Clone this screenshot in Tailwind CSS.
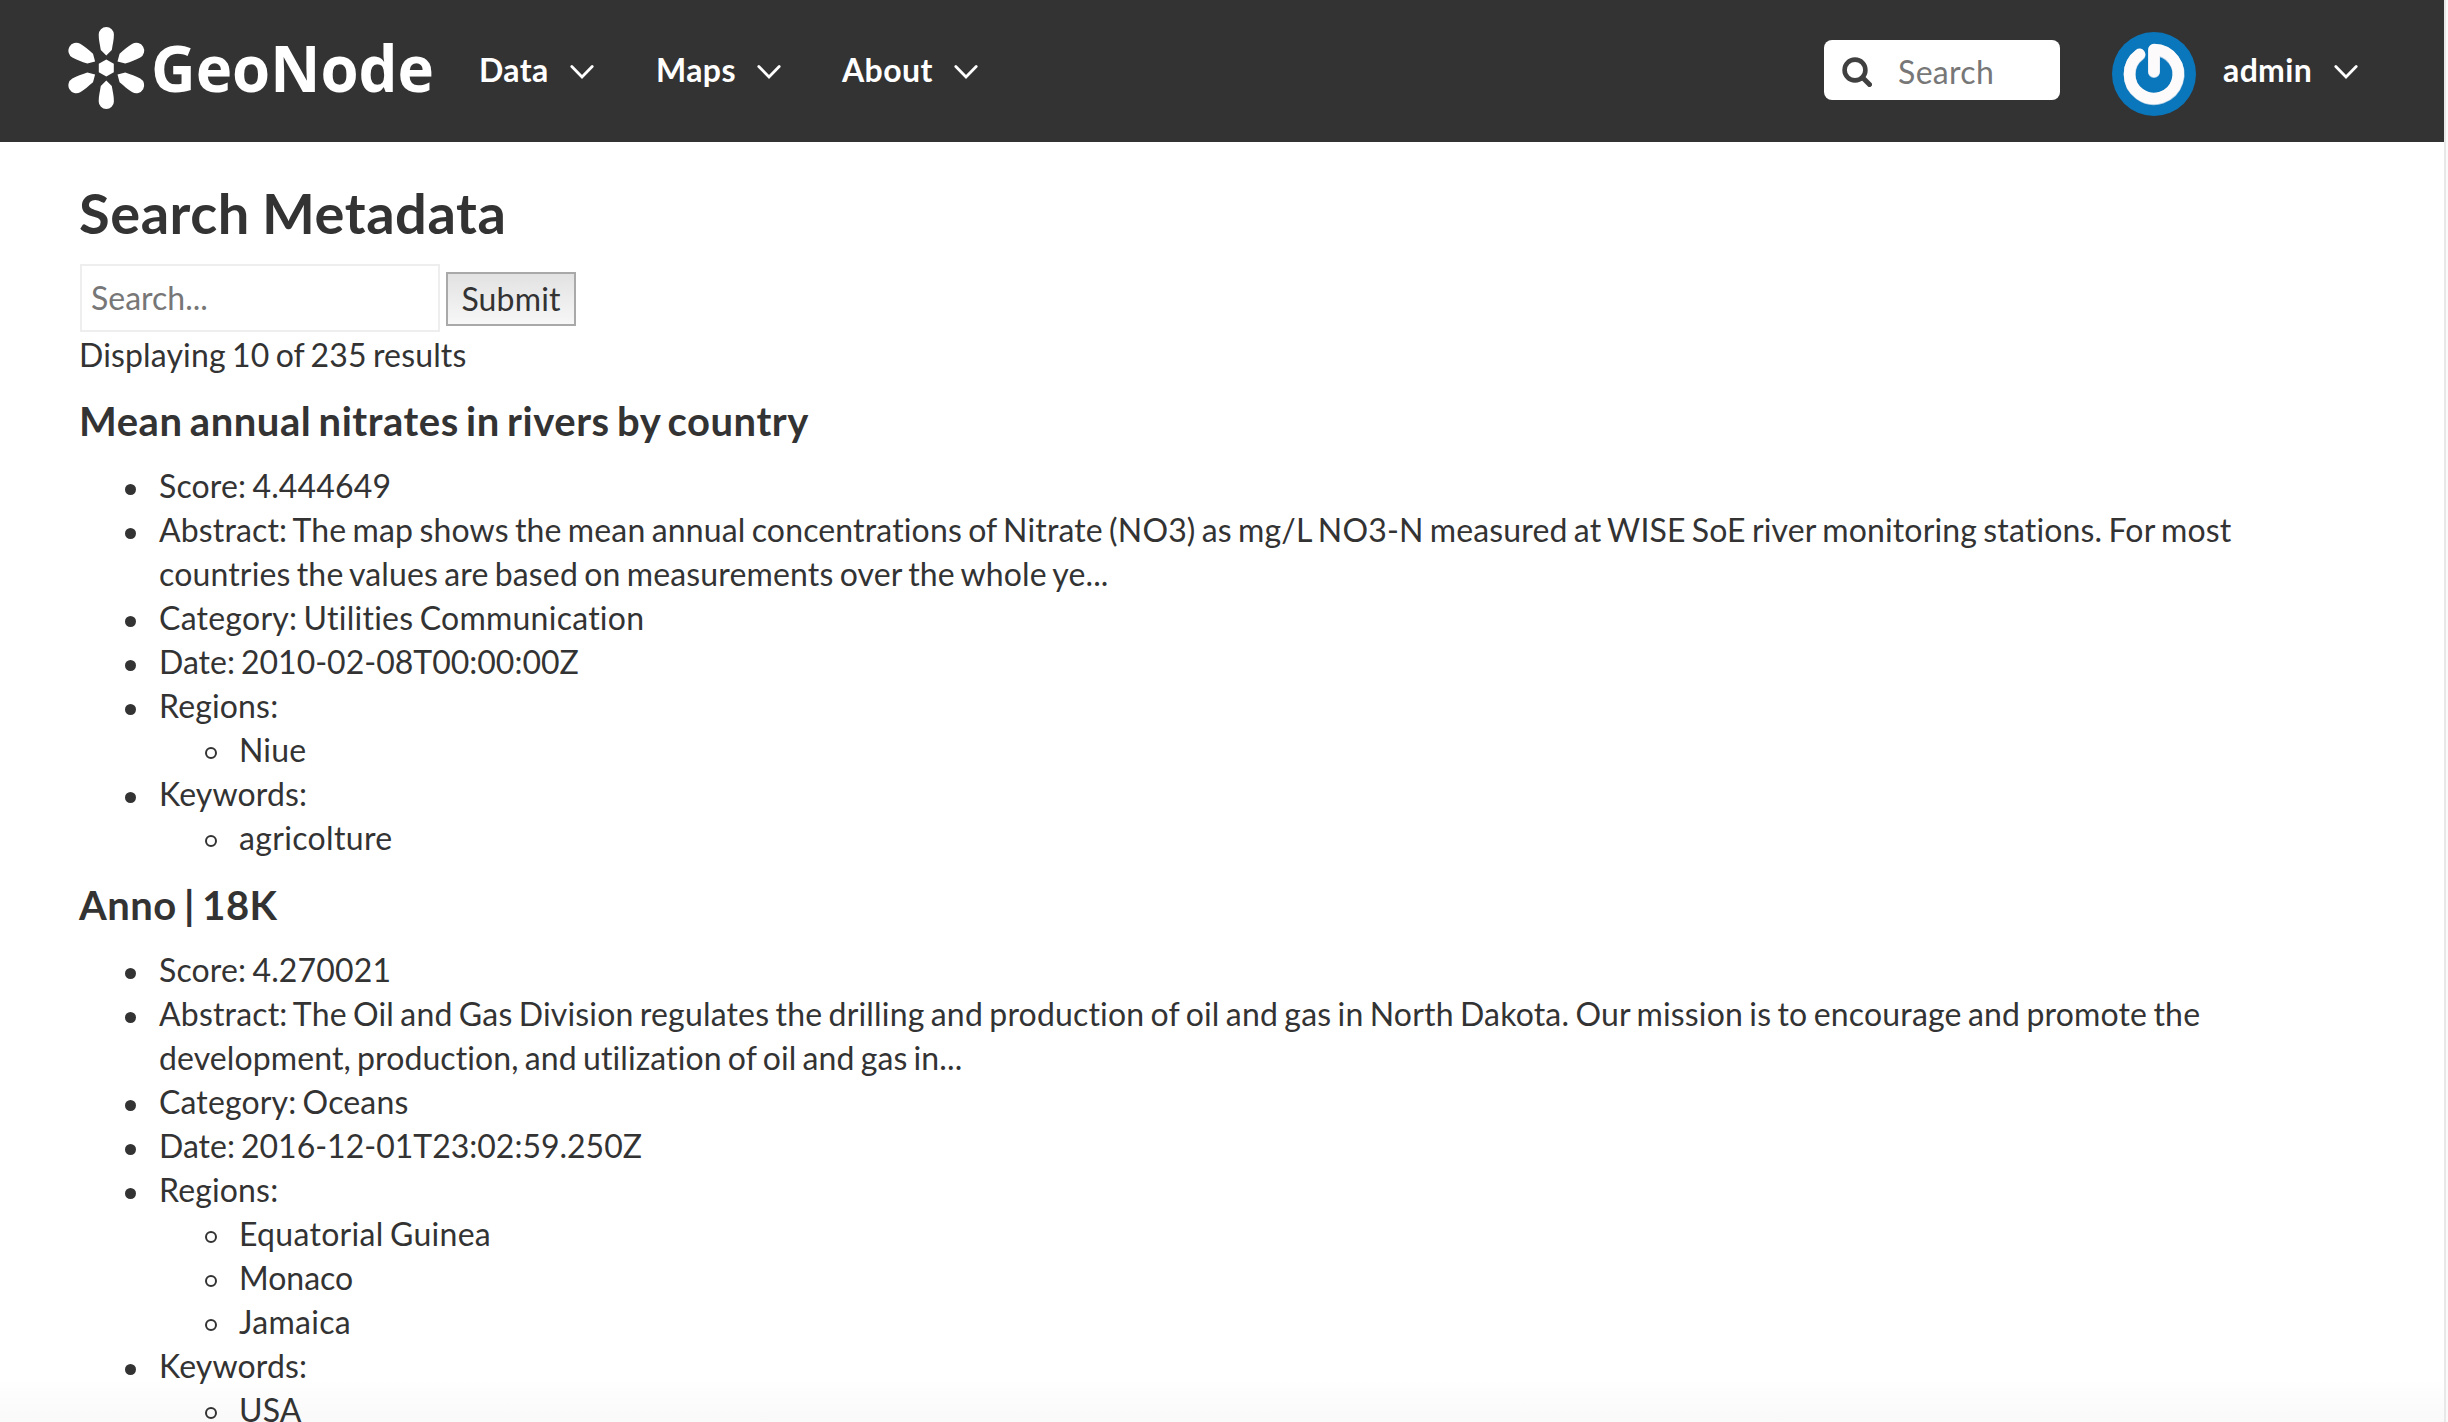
<!DOCTYPE html>
<html lang="en">
<head>
<meta charset="utf-8">
<title>Search Metadata</title>
<script src="https://cdn.jsdelivr.net/npm/@tailwindcss/browser@4"></script>
</head>
<body class="h-[1422px] w-[2448px] overflow-hidden bg-[#fafafa] font-['Lato',sans-serif] text-[32px] leading-[44px] text-[#333] [font-variant-ligatures:none] tracking-[0.15px] [word-spacing:-2.1px]">
<div class="h-full w-[2446px] overflow-hidden border-r-2 border-[#e8e8e8] bg-white bg-linear-to-b from-white from-97% to-[#f9f9f9]">
  <header class="flex h-[142px] items-center bg-[#333] pl-[66px] pr-[86px] font-bold text-white">
    <svg class="h-[142px] w-[376px] shrink-0" viewBox="66 0 376 142" fill="#fff">
      <g transform="translate(106.3 68)">
        <path d="M0-8.5 7.5-4.2V4.2L0 8.5-7.5 4.2V-4.2Z"/>
        <path id="petal" d="M0-12.5-5.5-18C-6.5-24-7.6-28-7.6-33.5A7.6 7.6 0 0 1 7.6-33.5C7.6-28 6.5-24 5.5-18Z"/>
        <use href="#petal" transform="rotate(60) scale(1.035)"/>
        <use href="#petal" transform="rotate(120) scale(1.035)"/>
        <use href="#petal" transform="rotate(180)"/>
        <use href="#petal" transform="rotate(240) scale(1.035)"/>
        <use href="#petal" transform="rotate(300) scale(1.035)"/>
      </g>
      <text class="font-['Open_Sans',sans-serif] tracking-normal" x="151" y="91.5" font-size="64.5" font-weight="700" textLength="283" lengthAdjust="spacingAndGlyphs">GeoNode</text>
    </svg>
    <nav class="-mt-[2px] ml-[37px] flex tracking-[0.4px]">
      <a class="flex w-[177px] items-center gap-[21px]">Data<svg class="mt-[3px] h-4 w-6" viewBox="0 0 24 16" fill="none" stroke="#fff" stroke-width="2.8" stroke-linecap="round"><path d="M1.800 2.500 12 13 22.200 2.500"/></svg></a>
      <a class="flex w-[186px] items-center gap-[21px]">Maps<svg class="mt-[3px] h-4 w-6" viewBox="0 0 24 16" fill="none" stroke="#fff" stroke-width="2.8" stroke-linecap="round"><path d="M1.800 2.500 12 13 22.200 2.500"/></svg></a>
      <a class="flex items-center gap-[21px]">About<svg class="mt-[3px] h-4 w-6" viewBox="0 0 24 16" fill="none" stroke="#fff" stroke-width="2.8" stroke-linecap="round"><path d="M1.800 2.500 12 13 22.200 2.500"/></svg></a>
    </nav>
    <div class="ml-auto flex items-center">
      <div class="-mt-[2px] flex h-[60px] w-[236px] items-center rounded-lg bg-white pl-[18px] font-normal text-[#777]">
        <svg class="mr-[26px] mt-[3px] h-[30px] w-[30px]" viewBox="0 0 30 30" fill="none" stroke="#404040" stroke-width="4.600" stroke-linecap="round"><circle cx="13" cy="13" r="10.400"/><path d="m20.500 20.500 7 7" stroke-width="5"/></svg>
        <span class="pt-[3px] tracking-[0.3px]">Search</span>
      </div>
      <svg class="ml-[52px] mt-[6px] h-[84px] w-[84px]" viewBox="0 0 84 84" fill="none" stroke-width="11.500" stroke-linecap="round" stroke-linejoin="round">
        <circle cx="42" cy="42" r="42" fill="#0a76bb"/>
        <path d="M27.500 23A24.400 24.400 0 1 0 42 18.200V40" stroke="#a9cbe3" stroke-width="12"/>
        <path d="M27.500 22.300A24.400 24.400 0 1 0 42 17.600V39.500" stroke="#fcfafb"/>
      </svg>
      <a class="-mt-[2px] ml-[27px] flex items-center gap-[22px] tracking-[0.3px]">admin<svg class="mt-[3px] h-4 w-6" viewBox="0 0 24 16" fill="none" stroke="#fff" stroke-width="2.8" stroke-linecap="round"><path d="M1.800 2.500 12 13 22.200 2.500"/></svg></a>
    </div>
  </header>
  <main class="px-[79px] pt-[36px]">
    <h1 class="text-[56px] font-bold leading-[70px] tracking-[0.55px]">Search Metadata</h1>
    <form class="mt-[16px] flex items-center gap-[6px] pl-px">
      <div class="flex h-[68px] w-[360px] items-center border-2 border-[#eee] bg-white pl-[9px] text-[#777] tracking-normal">Search...</div>
      <div class="mt-[2px] flex h-[54px] w-[130px] items-center justify-center border-2 border-[#a9a9a9] bg-linear-to-b from-[#e2e2e2] to-[#f7f7f7]">Submit</div>
    </form>
    <p class="pt-px">Displaying 10 of 235 results</p>
    <h3 class="mb-[21px] mt-[22px] text-[40px] font-bold leading-[44px] tracking-[0.54px] [word-spacing:-3px]">Mean annual nitrates in rivers by country</h3>
    <ul class="pl-20 [&>li]:relative [&>li]:before:absolute [&>li]:before:-left-[34px] [&>li]:before:top-[20px] [&>li]:before:size-[11px] [&>li]:before:rounded-full [&>li]:before:bg-[#333]">
      <li>Score: 4.444649</li>
      <li>Abstract: The map shows the mean annual concentrations of Nitrate (NO3) as mg/L NO3-N measured at WISE SoE river monitoring stations. For most<br>countries the values are based on measurements over the whole ye...</li>
      <li class="tracking-[0.25px]">Category: Utilities Communication</li>
      <li class="tracking-normal">Date: 2010-02-08T00:00:00Z</li>
      <li>Regions:<ul class="pl-20 [&>li]:relative [&>li]:before:absolute [&>li]:before:-left-[34px] [&>li]:before:top-[19px] [&>li]:before:size-[12px] [&>li]:before:rounded-full [&>li]:before:border-2 [&>li]:before:border-[#333]"><li>Niue</li></ul></li>
      <li>Keywords:<ul class="pl-20 tracking-[0.35px] [&>li]:relative [&>li]:before:absolute [&>li]:before:-left-[34px] [&>li]:before:top-[19px] [&>li]:before:size-[12px] [&>li]:before:rounded-full [&>li]:before:border-2 [&>li]:before:border-[#333]"><li>agricolture</li></ul></li>
    </ul>
    <h3 class="mb-[21px] mt-[23px] text-[40px] font-bold leading-[44px] tracking-[0.5px] [word-spacing:-3px]">Anno | 18K</h3>
    <ul class="pl-20 [&>li]:relative [&>li]:before:absolute [&>li]:before:-left-[34px] [&>li]:before:top-[20px] [&>li]:before:size-[11px] [&>li]:before:rounded-full [&>li]:before:bg-[#333]">
      <li>Score: 4.270021</li>
      <li><span class="tracking-[0.18px]">Abstract: The Oil and Gas Division regulates the drilling and production of oil and gas in North Dakota. Our mission is to encourage and promote the</span><br><span class="tracking-[0.1px]">development, production, and utilization of oil and gas in...</span></li>
      <li>Category: Oceans</li>
      <li class="tracking-normal">Date: 2016-12-01T23:02:59.250Z</li>
      <li>Regions:<ul class="pl-20 tracking-[0.3px] [&>li]:relative [&>li]:before:absolute [&>li]:before:-left-[34px] [&>li]:before:top-[19px] [&>li]:before:size-[12px] [&>li]:before:rounded-full [&>li]:before:border-2 [&>li]:before:border-[#333]"><li>Equatorial Guinea</li><li class="tracking-normal">Monaco</li><li>Jamaica</li></ul></li>
      <li>Keywords:<ul class="pl-20 [&>li]:relative [&>li]:before:absolute [&>li]:before:-left-[34px] [&>li]:before:top-[19px] [&>li]:before:size-[12px] [&>li]:before:rounded-full [&>li]:before:border-2 [&>li]:before:border-[#333]"><li>USA</li></ul></li>
    </ul>
  </main>
</div>
</body>
</html>
